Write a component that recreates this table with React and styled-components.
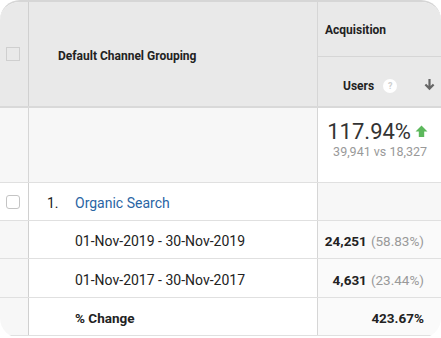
import styled, { createGlobalStyle } from "styled-components";

const Global = createGlobalStyle`
  html, body {
    margin: 0;
    padding: 0;
    background: #ffffff;
  }
  body {
    font-family: Roboto, "Liberation Sans", Arial, sans-serif;
    color: #222;
  }
`;

export default function App() {
  return (
    <>
      <Global />
      <Card>
        <Header>
          <CheckCell $span>
            <Box />
          </CheckCell>
          <GroupHead>Default Channel Grouping</GroupHead>
          <TopHead>Acquisition</TopHead>
          <MetricHead>
            Users
            <Help>?</Help>
            <SortArrow viewBox="0 0 12 14">
              <path d="M6 1v10M1.5 7l4.5 4.5L10.5 7" fill="none" stroke="#666" strokeWidth="2.4" />
            </SortArrow>
          </MetricHead>
        </Header>

        <Row $height={75} $bg="#f7f7f7">
          <Cell />
          <Cell />
          <ValueCell $bg="#ffffff" $top>
            <Big>
              117.94%
              <UpArrow viewBox="0 0 12 12">
                <path d="M6 0.5L11.5 6H8.5v5h-5V6H0.5z" fill="#5cb85c" />
              </UpArrow>
            </Big>
            <Compare>39,941 vs 18,327</Compare>
          </ValueCell>
        </Row>

        <Row $height={38} $bg="#ffffff">
          <CheckCell>
            <Box $round />
          </CheckCell>
          <Cell>
            <Index>1.</Index>
            <Channel>Organic Search</Channel>
          </Cell>
          <ValueCell $bg="#f7f7f7" />
        </Row>

        <Row $height={38} $bg="#ffffff">
          <CheckCell $bg="#f7f7f7" />
          <Cell $indent>01-Nov-2019 - 30-Nov-2019</Cell>
          <ValueCell $bg="#fafafa">
            <Num>24,251</Num>
            <Share>(58.83%)</Share>
          </ValueCell>
        </Row>

        <Row $height={39} $bg="#ffffff">
          <CheckCell $bg="#f7f7f7" />
          <Cell $indent>01-Nov-2017 - 30-Nov-2017</Cell>
          <ValueCell $bg="#fafafa">
            <Num>4,631</Num>
            <Share>(23.44%)</Share>
          </ValueCell>
        </Row>

        <Row $height={38} $bg="#ffffff">
          <CheckCell $bg="#f7f7f7" />
          <Cell $indent $bold>% Change</Cell>
          <ValueCell $bg="#fafafa">
            <Num>423.67%</Num>
          </ValueCell>
        </Row>
      </Card>
    </>
  );
}

const Card = styled.div`
  width: 441px;
  height: 338px;
  box-sizing: border-box;
  border-top: 2px solid #d6d6d6;
  border-radius: 20px;
  overflow: hidden;
  background: #fff;
`;

const Header = styled.div`
  display: grid;
  grid-template-columns: 29px 289px 1fr;
  grid-template-rows: 55px 49px;
  background: #e9e9e9;
  border-bottom: 2px solid #d9d9d9;
`;

const Row = styled.div`
  display: grid;
  grid-template-columns: 29px 289px 1fr;
  height: ${(p) => p.$height}px;
  box-sizing: border-box;
  border-bottom: 1px solid #e0e0e0;
  background: ${(p) => p.$bg};
`;

const Cell = styled.div`
  display: flex;
  align-items: center;
  box-sizing: border-box;
  border-right: 1px solid #d6d6d6;
  padding-left: ${(p) => (p.$indent ? "46px" : "18px")};
  padding-top: 3px;
  font-size: ${(p) => (p.$bold ? "13.5px" : "14px")};
  font-weight: ${(p) => (p.$bold ? 700 : 400)};
  color: #222;
  background: ${(p) => p.$bg || "transparent"};
`;

const CheckCell = styled.div`
  display: flex;
  align-items: center;
  justify-content: center;
  padding-right: 2px;
  box-sizing: border-box;
  border-right: 1px solid #d0d0d0;
  background: ${(p) => p.$bg || "transparent"};
  ${(p) => p.$span && "grid-row: 1 / 3;"}
`;

const Box = styled.span`
  width: 12px;
  height: 12px;
  border: 1px solid ${(p) => (p.$round ? "#c4c4c4" : "#cfcfcf")};
  border-radius: ${(p) => (p.$round ? "3px" : "0")};
  background: ${(p) => (p.$round ? "#fff" : "transparent")};
`;

const GroupHead = styled.div`
  grid-row: 1 / 3;
  display: flex;
  align-items: center;
  padding-left: 29px;
  padding-top: 4px;
  border-right: 1px solid #d6d6d6;
  font-size: 12px;
  font-weight: 700;
  color: #222;
`;

const TopHead = styled.div`
  display: flex;
  align-items: center;
  padding-left: 7px;
  padding-top: 2px;
  border-bottom: 1px solid #d6d6d6;
  font-size: 12px;
  font-weight: 700;
  color: #222;
`;

const MetricHead = styled.div`
  display: flex;
  align-items: center;
  padding-left: 25px;
  padding-top: 9px;
  font-size: 12px;
  font-weight: 700;
  color: #222;
`;

const Help = styled.span`
  width: 14px;
  height: 14px;
  margin-left: 9px;
  border-radius: 50%;
  background: #fff;
  color: #cfcfcf;
  font-size: 9px;
  font-weight: 700;
  display: flex;
  align-items: center;
  justify-content: center;
`;

const SortArrow = styled.svg`
  width: 11px;
  height: 13px;
  margin-left: auto;
  margin-right: 6px;
  margin-top: -4px;
`;

const ValueCell = styled.div`
  display: flex;
  flex-direction: ${(p) => (p.$top ? "column" : "row")};
  align-items: ${(p) => (p.$top ? "flex-end" : "center")};
  justify-content: ${(p) => (p.$top ? "flex-start" : "flex-end")};
  padding: ${(p) => (p.$top ? "10px 14px 0 0" : "3px 17px 0 0")};
  background: ${(p) => p.$bg};
  font-size: 13.5px;
`;

const Big = styled.div`
  display: flex;
  align-items: center;
  font-size: 22px;
  color: #333;
  line-height: 28px;
  margin-right: -1px;
`;

const UpArrow = styled.svg`
  width: 13px;
  height: 13px;
  margin-left: 4px;
  margin-top: -2px;
`;

const Compare = styled.div`
  font-size: 12.5px;
  color: #999;
  line-height: 14px;
  margin-top: -1px;
`;

const Index = styled.span`
  width: 28px;
  color: #222;
`;

const Channel = styled.span`
  color: #2a65a4;
`;

const Num = styled.span`
  font-weight: 700;
  color: #222;
`;

const Share = styled.span`
  margin-left: 4px;
  color: #999;
`;
